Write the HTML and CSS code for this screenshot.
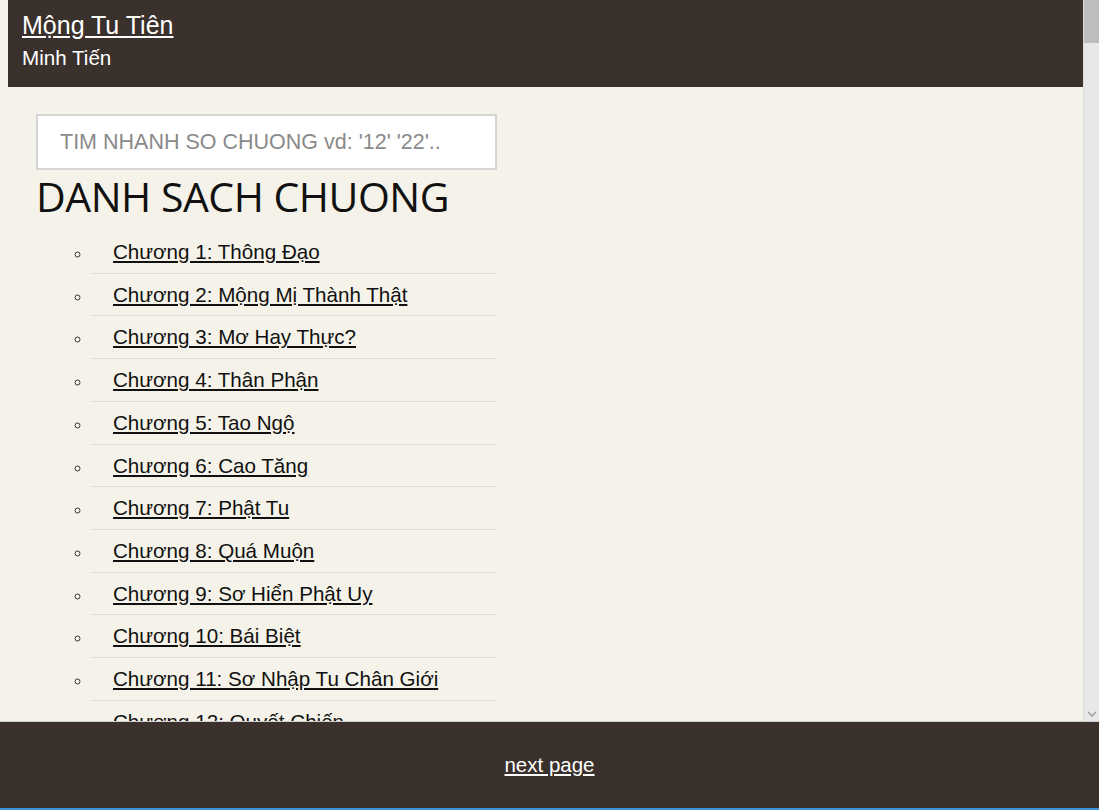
FILE: index.html
```html
<!DOCTYPE html>
<html lang="vi">
<head>
  <meta charset="UTF-8" />
  <title>Mộng Tu Tiên - Minh Tiến</title>
  <meta name="viewport" content="width=device-width, initial-scale=1.0" />
  <link rel="stylesheet" href="styles.css">
</head>
<body>

<div class="main">
  <div class="viewport">
    <header>
      <a href="#" class="story-title">Mộng Tu Tiên</a>
      <div class="author">Minh Tiến</div>
    </header>

    <div class="content">
      <input type="text" id="search" class="search" placeholder="TIM NHANH SO CHUONG vd: '12' '22'..">
      <h2>DANH SACH CHUONG</h2>
      <ul id="chapters" class="chapters">
        <li><a href="#">Chương 1: Thông Đạo</a></li>
        <li><a href="#">Chương 2: Mộng Mị Thành Thật</a></li>
        <li><a href="#">Chương 3: Mơ Hay Thực?</a></li>
        <li><a href="#">Chương 4: Thân Phận</a></li>
        <li><a href="#">Chương 5: Tao Ngộ</a></li>
        <li><a href="#">Chương 6: Cao Tăng</a></li>
        <li><a href="#">Chương 7: Phật Tu</a></li>
        <li><a href="#">Chương 8: Quá Muộn</a></li>
        <li><a href="#">Chương 9: Sơ Hiển Phật Uy</a></li>
        <li><a href="#">Chương 10: Bái Biệt</a></li>
        <li><a href="#">Chương 11: Sơ Nhập Tu Chân Giới</a></li>
        <li><a href="#">Chương 12: Quyết Chiến</a></li>
      </ul>
    </div>
  </div>

  <!-- scroll track for the chapter list -->
  <div class="scrollbar">
    <div class="scroll-thumb"></div>
    <svg class="scroll-down" width="16" height="12" viewBox="0 0 16 12">
      <path d="M4 4 L8 8 L12 4" fill="none" stroke="#a3a3a3" stroke-width="1.6"/>
    </svg>
  </div>
</div>

<footer>
  <a href="#">next page</a>
</footer>

<script>
// quick jump by chapter number
const list = document.getElementById('chapters');
document.getElementById('search').addEventListener('input', function () {
  const q = this.value.trim();
  list.querySelectorAll('li').forEach(li => {
    li.style.display = !q || li.textContent.includes('Chương ' + q + ':') ? '' : 'none';
  });
});
</script>

</body>
</html>
```

FILE: styles.css
```css
html, body {
  margin: 0;
  height: 100%;
}
body {
  display: flex;
  flex-direction: column;
  overflow: hidden;
  font-family: 'Liberation Sans', Arial, sans-serif;
  background-color: #f5f3e9;
  color: #111;
}
.main {
  flex: 1;
  min-height: 0;
  display: flex;
}
.viewport {
  flex: 1;
  overflow: hidden;
  padding-left: 8px;
}
.scrollbar {
  width: 16px;
  display: flex;
  flex-direction: column;
  justify-content: space-between;
  background-color: #e8e8e8;
  border-left: 1px solid #dcdcdc;
  box-sizing: border-box;
}
.scroll-thumb {
  height: 43px;
  background-color: #bdbdbd;
}
.scroll-down {
  display: block;
  margin-bottom: 1px;
}
header {
  background-color: #3a312c;
  padding: 10px 14px 17px;
}
.story-title {
  display: block;
  color: #fff;
  font-size: 25px;
  line-height: 30px;
  width: max-content;
}
.author {
  color: #fff;
  font-size: 20.6px;
  line-height: 24px;
  margin-top: 6px;
}
.content {
  width: 461px;
  padding: 27px 0 0 28px;
}
.search {
  display: block;
  box-sizing: border-box;
  width: 100%;
  height: 56px;
  margin: 0;
  padding: 0 22px;
  border: 2px solid #d6d6d6;
  background-color: #fff;
  font-family: 'Liberation Sans', Arial, sans-serif;
  font-size: 21.5px;
  outline: none;
}
.search::placeholder {
  color: #8a8a8a;
}
h2 {
  margin: 1px 0 0;
  font-family: 'Open Sans', sans-serif;
  font-size: 41px;
  font-weight: 400;
  letter-spacing: -0.5px;
  line-height: 50px;
  color: #111;
}
.chapters {
  list-style: circle;
  margin: 10px 0 0;
  padding-left: 55px;
}
.chapters li {
  padding: 9px 22px;
  line-height: 23.7px;
  font-size: 20.6px;
  border-bottom: 1px solid #dedcd6;
}
.chapters li::marker {
  font-size: 16px;
  color: #333;
}
.chapters a {
  color: #111;
}
footer {
  flex: 0 0 86px;
  display: flex;
  align-items: center;
  justify-content: center;
  background-color: #3a312c;
  border-top: 1px solid #cfcfcf;
  border-bottom: 2px solid #3d8fd8;
}
footer a {
  color: #fff;
  font-size: 20.5px;
}
```
